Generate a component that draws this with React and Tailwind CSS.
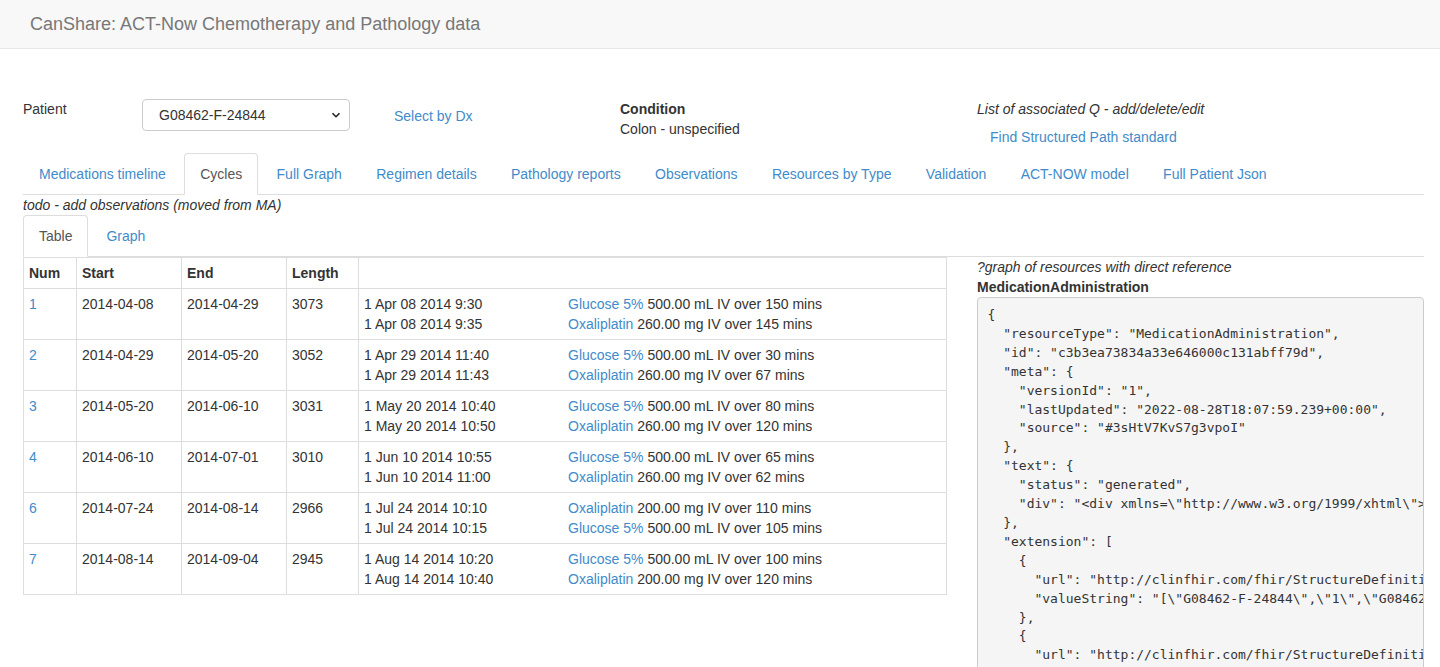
const link = 'text-[#428bca]';

const rows = [
    { num: '1', start: '2014-04-08', end: '2014-04-29', len: '3073', items: [
        ['1 Apr 08 2014 9:30', 'Glucose 5%', '500.00 mL IV over 150 mins'],
        ['1 Apr 08 2014 9:35', 'Oxaliplatin', '260.00 mg IV over 145 mins'],
    ] },
    { num: '2', start: '2014-04-29', end: '2014-05-20', len: '3052', items: [
        ['1 Apr 29 2014 11:40', 'Glucose 5%', '500.00 mL IV over 30 mins'],
        ['1 Apr 29 2014 11:43', 'Oxaliplatin', '260.00 mg IV over 67 mins'],
    ] },
    { num: '3', start: '2014-05-20', end: '2014-06-10', len: '3031', items: [
        ['1 May 20 2014 10:40', 'Glucose 5%', '500.00 mL IV over 80 mins'],
        ['1 May 20 2014 10:50', 'Oxaliplatin', '260.00 mg IV over 120 mins'],
    ] },
    { num: '4', start: '2014-06-10', end: '2014-07-01', len: '3010', items: [
        ['1 Jun 10 2014 10:55', 'Glucose 5%', '500.00 mL IV over 65 mins'],
        ['1 Jun 10 2014 11:00', 'Oxaliplatin', '260.00 mg IV over 62 mins'],
    ] },
    { num: '6', start: '2014-07-24', end: '2014-08-14', len: '2966', items: [
        ['1 Jul 24 2014 10:10', 'Oxaliplatin', '200.00 mg IV over 110 mins'],
        ['1 Jul 24 2014 10:15', 'Glucose 5%', '500.00 mL IV over 105 mins'],
    ] },
    { num: '7', start: '2014-08-14', end: '2014-09-04', len: '2945', items: [
        ['1 Aug 14 2014 10:20', 'Glucose 5%', '500.00 mL IV over 100 mins'],
        ['1 Aug 14 2014 10:40', 'Oxaliplatin', '200.00 mg IV over 120 mins'],
    ] },
];

const tabs = ['Medications timeline', 'Cycles', 'Full Graph', 'Regimen details', 'Pathology reports', 'Observations', 'Resources by Type', 'Validation', 'ACT-NOW model', 'Full Patient Json'];

const json = `{
  "resourceType": "MedicationAdministration",
  "id": "c3b3ea73834a33e646000c131abff79d",
  "meta": {
    "versionId": "1",
    "lastUpdated": "2022-08-28T18:07:59.239+00:00",
    "source": "#3sHtV7KvS7g3vpoI"
  },
  "text": {
    "status": "generated",
    "div": "<div xmlns=\\"http://www.w3.org/1999/xhtml\\"><p>MedicationAdministration</p></div>"
  },
  "extension": [
    {
      "url": "http://clinfhir.com/fhir/StructureDefinition/canshare-regimen",
      "valueString": "[\\"G08462-F-24844\\",\\"1\\",\\"G08462-F-24844-1\\"]"
    },
    {
      "url": "http://clinfhir.com/fhir/StructureDefinition/canshare-cycle",
      "valueString": "1"
    }
  ]
}`;

const Tab = ({ label, active, gap = 'mr-[2px]' }) => (
    <li className={`${gap} -mb-px`}>
        {active ? (
            <span className="block px-[15px] py-[10px] leading-5 text-[#555] bg-white border border-[#ddd] border-b-transparent rounded-t">{label}</span>
        ) : (
            <span className={`block px-[15px] py-[10px] leading-5 border border-transparent ${link}`}>{label}</span>
        )}
    </li>
);

const App = () => {
    return (
        <div className="min-h-screen bg-white text-[#333] text-[14px] leading-5" style={{ fontFamily: '"Liberation Sans", Arial, sans-serif' }}>
            <div className="h-[49px] bg-[#f8f8f8] border-b border-[#e7e7e7] flex items-center px-[30px]">
                <span className="text-[18px] text-[#777]">CanShare: ACT-Now Chemotherapy and Pathology data</span>
            </div>

            <div className="px-[23px] pr-[16px]">
                <div className="flex mt-[50px] h-[54px]">
                    <div className="w-[119px]">Patient</div>
                    <div className="w-[237px] pr-[29px]">
                        <div className="h-8 border border-[#ccc] rounded flex items-center justify-between pl-4 pr-2 bg-white">
                            <span>G08462-F-24844</span>
                            <svg width="10" height="10" viewBox="0 0 10 10"><path d="M1.5 3.2 L5 6.7 L8.5 3.2" fill="none" stroke="#222" strokeWidth="1.6" /></svg>
                        </div>
                    </div>
                    <div className="w-[241px] pl-[15px] pt-[7px]">
                        <span className={link}>Select by Dx</span>
                    </div>
                    <div className="w-[357px]">
                        <div className="font-bold">Condition</div>
                        <div>Colon - unspecified</div>
                    </div>
                    <div className="flex-1">
                        <div className="italic">List of associated Q - add/delete/edit</div>
                        <div className={`pl-[13px] mt-2 ${link}`}>Find Structured Path standard</div>
                    </div>
                </div>

                <ul className="flex border-b border-[#ddd]">
                    {tabs.map((t) => <Tab key={t} label={t} active={t === 'Cycles'} gap="mr-[2.35px]" />)}
                </ul>
                <div className="italic">todo - add observations (moved from MA)</div>
                <ul className="flex border-b border-[#ddd]">
                    <Tab label="Table" active />
                    <Tab label="Graph" />
                </ul>

                <div className="flex">
                    <div className="w-[924px] shrink-0">
                        <table className="w-full border-collapse border border-[#ddd]">
                            <thead>
                                <tr className="text-left">
                                    <th className="w-[53px] border border-[#ddd] px-[5px] py-[5px] font-bold">Num</th>
                                    <th className="w-[105px] border border-[#ddd] px-[5px] py-[5px] font-bold">Start</th>
                                    <th className="w-[105px] border border-[#ddd] px-[5px] py-[5px] font-bold">End</th>
                                    <th className="w-[72px] border border-[#ddd] px-[5px] py-[5px] font-bold">Length</th>
                                    <th className="border border-[#ddd] px-[5px] py-[5px]"></th>
                                </tr>
                            </thead>
                            <tbody>
                                {rows.map((r) => (
                                    <tr key={r.num} className="align-top">
                                        <td className={`border border-[#ddd] px-[5px] py-[5px] ${link}`}>{r.num}</td>
                                        <td className="border border-[#ddd] px-[5px] py-[5px]">{r.start}</td>
                                        <td className="border border-[#ddd] px-[5px] py-[5px]">{r.end}</td>
                                        <td className="border border-[#ddd] px-[5px] py-[5px]">{r.len}</td>
                                        <td className="border border-[#ddd] px-[5px] py-[5px]">
                                            {r.items.map((it, i) => (
                                                <div key={i} className="flex">
                                                    <span className="w-[204px] shrink-0">{it[0]}</span>
                                                    <span><span className={link}>{it[1]}</span> {it[2]}</span>
                                                </div>
                                            ))}
                                        </td>
                                    </tr>
                                ))}
                            </tbody>
                        </table>
                    </div>
                    <div className="w-[447px] ml-[30px] shrink-0">
                        <div className="italic">?graph of resources with direct reference</div>
                        <div className="font-bold">MedicationAdministration</div>
                        <pre className="mt-0 bg-[#f5f5f5] border border-[#ccc] rounded px-[9.5px] pt-[8px] pb-[9.5px] text-[13px] leading-[18.9px] text-[#333] overflow-hidden whitespace-pre h-[400px]" style={{ fontFamily: '"DejaVu Sans Mono", "Liberation Mono", monospace' }}>{json}</pre>
                    </div>
                </div>
            </div>
        </div>
    );
};

export default App;
